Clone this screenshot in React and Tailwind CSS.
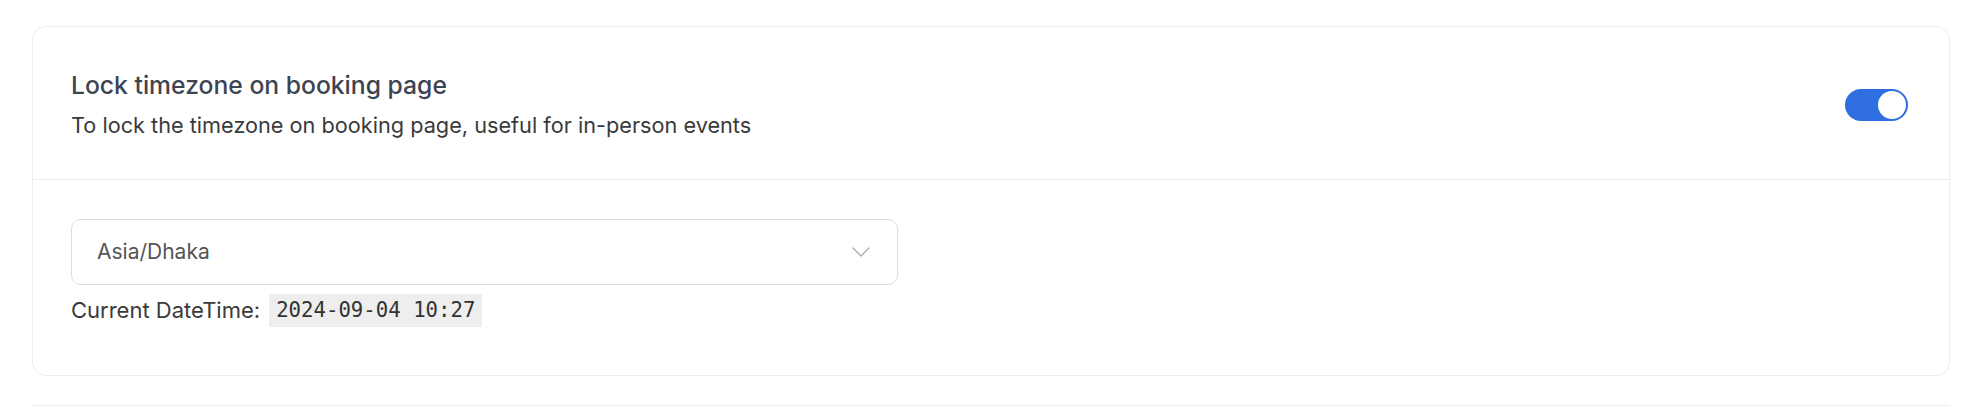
import React from "react";

function Toggle() {
  return (
    <div className="flex h-[32px] w-[63px] items-center justify-end rounded-full bg-[#2f6ee0] p-[2px]">
      <div className="h-[28px] w-[28px] rounded-full bg-white" />
    </div>
  );
}

function Chevron() {
  return (
    <svg width="18" height="10" viewBox="0 0 18 10" fill="none">
      <path d="M1 1l8 8 8-8" stroke="#a9a9a9" strokeWidth="1.3" strokeLinecap="round" strokeLinejoin="round" />
    </svg>
  );
}

export default function App() {
  return (
    <div className="min-h-screen bg-white pl-[32px] pr-[28px] pt-[26px] font-['Inter',sans-serif]">
      {/* Lock timezone card */}
      <div className="rounded-[14px] border border-[#ececec]">
        <div className="flex items-center justify-between pl-[38px] pr-[41px] pt-[43px] pb-[39px]">
          <div>
            <h3 className="text-[24.7px] leading-[30px] font-medium text-[#3d4451]">
              Lock timezone on booking page
            </h3>
            <p className="mt-[10px] text-[21.7px] leading-[30px] text-[#3a3a3a]">
              To lock the timezone on booking page, useful for in-person events
            </p>
          </div>
          <Toggle />
        </div>

        <div className="border-t border-[#ececec] px-[38px] pt-[39px] pb-[48px]">
          <div className="flex h-[66px] w-[827px] items-center justify-between rounded-[10px] border border-[#dcdcdc] pl-[25px] pr-[27px]">
            <span className="text-[21px] text-[#555555]">Asia/Dhaka</span>
            <Chevron />
          </div>
          <div className="mt-[9px] flex items-center gap-[9px] text-[22px] text-[#3a3a3a]">
            <span>Current DateTime:</span>
            <code className="bg-[#eeeeee] px-[7px] font-['DejaVu_Sans_Mono',monospace] text-[20.7px] leading-[33px] text-[#333333]">
              2024-09-04 10:27
            </code>
          </div>
        </div>
      </div>

      <div className="mt-[29px] border-t border-[#ececec]" />
    </div>
  );
}
